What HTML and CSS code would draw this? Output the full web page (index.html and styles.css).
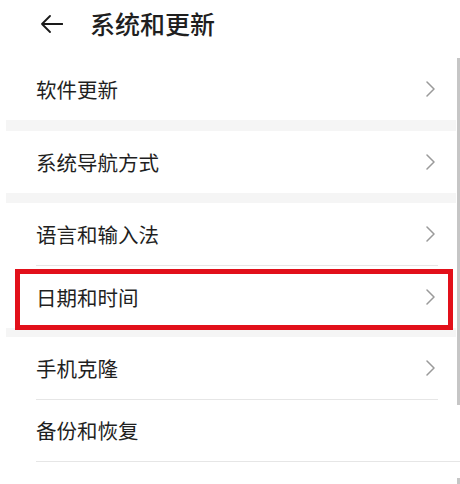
FILE: index.html
```html
<!DOCTYPE html>
<html lang="zh-CN">
<head>
<meta charset="utf-8">
<title>系统和更新</title>
<link rel="stylesheet" href="styles.css">
</head>
<body>
<div class="page">
  <header class="topbar">
    <svg class="back" width="23" height="18" viewBox="0 0 23 18" aria-hidden="true">
      <path d="M22.5 9H2 M10 1 L2 9 L10 17" fill="none" stroke="#1a1a1a" stroke-width="1.8" stroke-linecap="round" stroke-linejoin="round"/>
    </svg>
    <h1 class="title">系统和更新</h1>
  </header>

  <div class="group">
    <div class="row"><span class="label">软件更新</span><svg class="chev" width="9" height="16" viewBox="0 0 9 16"><path d="M1 1 L8 8 L1 15" fill="none" stroke="#9a9a9a" stroke-width="1.5" stroke-linecap="round" stroke-linejoin="round"/></svg></div>
  </div>
  <div class="band band-11"></div>
  <div class="group">
    <div class="row"><span class="label">系统导航方式</span><svg class="chev" width="9" height="16" viewBox="0 0 9 16"><path d="M1 1 L8 8 L1 15" fill="none" stroke="#9a9a9a" stroke-width="1.5" stroke-linecap="round" stroke-linejoin="round"/></svg></div>
  </div>
  <div class="band band-10"></div>
  <div class="group">
    <div class="row divided"><span class="label">语言和输入法</span><svg class="chev" width="9" height="16" viewBox="0 0 9 16"><path d="M1 1 L8 8 L1 15" fill="none" stroke="#9a9a9a" stroke-width="1.5" stroke-linecap="round" stroke-linejoin="round"/></svg></div>
    <div class="row"><span class="label">日期和时间</span><svg class="chev" width="9" height="16" viewBox="0 0 9 16"><path d="M1 1 L8 8 L1 15" fill="none" stroke="#9a9a9a" stroke-width="1.5" stroke-linecap="round" stroke-linejoin="round"/></svg></div>
  </div>
  <div class="band band-9"></div>
  <div class="group">
    <div class="row divided"><span class="label">手机克隆</span><svg class="chev" width="9" height="16" viewBox="0 0 9 16"><path d="M1 1 L8 8 L1 15" fill="none" stroke="#9a9a9a" stroke-width="1.5" stroke-linecap="round" stroke-linejoin="round"/></svg></div>
    <div class="row divided full short"><span class="label">备份和恢复</span></div>
  </div>

  <div class="highlight"></div>
  <div class="scrollbar"></div>
  <div class="scrollbar scrollbar-tail"></div>
</div>
</body>
</html>
```

FILE: styles.css
```css
* { box-sizing: border-box; }
html, body {
  margin: 0;
  padding: 0;
  background: #ffffff;
}
body {
  font-family: "Noto Sans CJK SC", "Noto Sans", sans-serif;
  color: #1a1a1a;
}
.page {
  position: relative;
  width: 460px;
  height: 484px;
  overflow: hidden;
  background: #ffffff;
}
.topbar {
  display: flex;
  align-items: center;
  height: 58px;
  padding-left: 40px;
  padding-bottom: 11px;
}
.back {
  flex: none;
  margin-top: 1px;
}
.title {
  margin: 0 0 0 27px;
  font-size: 25px;
  font-weight: 500;
  line-height: 1;
  color: #1f1f1f;
}
.group {
  background: #ffffff;
}
.row {
  display: flex;
  align-items: center;
  justify-content: space-between;
  height: 62px;
  margin: 0 22px 0 36px;
  padding-right: 3px;
}
.row.divided {
  height: 63px;
  border-bottom: 1px solid #e6e6e6;
}
.row.full {
  margin-right: 0;
}
.row.short {
  height: 62px;
}
.label {
  font-size: 20.5px;
  line-height: 1;
  color: #1f1f1f;
  letter-spacing: 0;
}
.chev {
  flex: none;
}
.band {
  background: #f5f5f5;
  margin: 0 4px 0 6px;
}
.band-11 { height: 11px; }
.band-10 { height: 10px; }
.band-9 { height: 9px; }
.highlight {
  position: absolute;
  left: 15px;
  top: 269px;
  width: 438px;
  height: 61px;
  border: 5px solid #e2101a;
}
.scrollbar {
  position: absolute;
  right: 0;
  top: 58px;
  width: 3px;
  height: 347px;
  background: #c6c6c6;
}
.scrollbar-tail {
  top: 478px;
  height: 6px;
}
```
